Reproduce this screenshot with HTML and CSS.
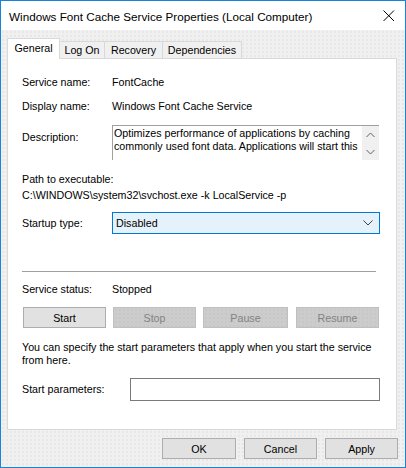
FILE: index.html
```html
<!DOCTYPE html>
<html lang="en">
<head>
    <meta charset="UTF-8">
    <title>Windows Font Cache Service Properties (Local Computer)</title>
    <link rel="stylesheet" href="styles.css">
</head>
<body>
    <div class="window">
        <div class="titlebar">
            <span class="title">Windows Font Cache Service Properties (Local Computer)</span>
            <svg class="close" width="12" height="12" viewBox="0 0 12 12">
                <path d="M0.5 0.5 L11 11 M11 0.5 L0.5 11" stroke="#000" stroke-width="1" fill="none"/>
            </svg>
        </div>

        <div class="client">
            <div class="tabs">
                <div class="tab selected tab-general">General</div>
                <div class="tab tab-logon">Log On</div>
                <div class="tab tab-recovery">Recovery</div>
                <div class="tab tab-deps">Dependencies</div>
            </div>

            <div class="panel">
                <div class="field row-service">
                    <span class="label">Service name:</span>
                    <span class="value">FontCache</span>
                </div>
                <div class="field row-display">
                    <span class="label">Display name:</span>
                    <span class="value">Windows Font Cache Service</span>
                </div>
                <div class="field row-desc">
                    <span class="label desc-label">Description:</span>
                    <div class="desc-box">
                        <div class="desc-text">Optimizes performance of applications by caching<br>commonly used font data. Applications will start this</div>
                        <div class="scrollbar">
                            <svg width="9" height="6" viewBox="0 0 9 6"><path d="M0.5 5 L4.5 1 L8.5 5" stroke="#606060" fill="none"/></svg>
                            <svg width="9" height="6" viewBox="0 0 9 6"><path d="M0.5 1 L4.5 5 L8.5 1" stroke="#606060" fill="none"/></svg>
                        </div>
                    </div>
                </div>

                <div class="path">
                    <div>Path to executable:</div>
                    <div>C:\WINDOWS\system32\svchost.exe -k LocalService -p</div>
                </div>

                <div class="field row-startup">
                    <span class="label">Startup type:</span>
                    <div class="combo">
                        <span>Disabled</span>
                        <svg width="10" height="6" viewBox="0 0 10 6"><path d="M0.5 0.5 L5 5 L9.5 0.5" stroke="#404040" fill="none"/></svg>
                    </div>
                </div>

                <div class="separator"></div>

                <div class="field row-status">
                    <span class="label">Service status:</span>
                    <span class="value">Stopped</span>
                </div>

                <div class="service-buttons">
                    <button class="btn">Start</button>
                    <button class="btn" disabled>Stop</button>
                    <button class="btn btn-pause" disabled>Pause</button>
                    <button class="btn" disabled>Resume</button>
                </div>

                <p class="hint">You can specify the start parameters that apply when you start the service<br>from here.</p>

                <div class="field row-params">
                    <span class="label params-label">Start parameters:</span>
                    <div class="params-input"></div>
                </div>
            </div>

            <div class="dialog-buttons">
                <button class="btn btn-ok">OK</button>
                <button class="btn">Cancel</button>
                <button class="btn">Apply</button>
            </div>
        </div>
    </div>
</body>
</html>
```

FILE: styles.css
```css
body {
    margin: 0;
    font-family: 'Liberation Sans', Arial, sans-serif;
    font-size: 10.7px;
    color: #000;
    background: #fff;
}
.window {
    width: 404px;
    height: 466px;
    border: 1px solid #1883d7;
    display: flex;
    flex-direction: column;
}
.titlebar {
    height: 29px;
    background: #fff;
    display: flex;
    align-items: center;
    justify-content: space-between;
    padding: 0 10px 0 8px;
}
.title {
    font-size: 11.7px;
    padding-top: 2px;
}
.close {
    margin-top: 1px;
}
.client {
    flex: 1;
    background-color: #f0f0f0;
    background-image: radial-gradient(circle, #e2e2e2 0.6px, transparent 0.9px);
    background-size: 4px 4px;
    padding: 8px 7px 0 6px;
}

/* tabs */
.tabs {
    display: flex;
    align-items: flex-end;
    height: 20px;
    position: relative;
    z-index: 1;
}
.tab {
    height: 16px;
    line-height: 17px;
    border: 1px solid #d9d9d9;
    border-bottom: none;
    background: #f0f0f0;
    text-align: center;
    margin-left: -1px;
    box-sizing: content-box;
}
.tab.selected {
    height: 20px;
    line-height: 19px;
    background: #fff;
    margin-left: 0;
    margin-bottom: -1px;
}
.tab-general { width: 51px; }
.tab-logon { width: 44px; margin-left: 0; border-left: none; }
.tab-recovery { width: 57px; }
.tab-deps { width: 78px; }

.panel {
    height: 370px;
    border: 1px solid #d9d9d9;
    background: #fff;
    padding: 0 14px;
    margin-right: 1px;
}

/* rows */
.field {
    display: flex;
    align-items: center;
    height: 15px;
    line-height: 15px;
}
.label {
    width: 90px;
    flex-shrink: 0;
}
.row-service { margin-top: 16px; }
.row-display { margin-top: 9px; }
.row-desc {
    margin-top: 11px;
    height: 35px;
    align-items: flex-start;
}
.desc-label { padding-top: 5px; }
.desc-box {
    width: 266px;
    height: 34px;
    border-top: 1px solid #a0a0a0;
    border-left: 1px solid #a0a0a0;
    display: flex;
    justify-content: space-between;
}
.desc-text {
    line-height: 13px;
    padding: 1px 0 0 1px;
    white-space: nowrap;
    overflow: hidden;
}
.scrollbar {
    width: 17px;
    flex-shrink: 0;
    background: #f0f0f0;
    display: flex;
    flex-direction: column;
    align-items: center;
    justify-content: space-between;
    padding: 6px 0 5px;
    box-sizing: border-box;
}
.scrollbar svg { display: block; }

.path {
    margin-top: 11px;
    line-height: 16px;
}

.row-startup {
    margin-top: 9px;
    height: 22px;
}
.combo {
    height: 20px;
    border: 1px solid #0078d7;
    background: #e5f1fb;
    display: flex;
    align-items: center;
    justify-content: space-between;
    padding: 0 6px 0 3px;
    box-sizing: content-box;
    margin-right: -3px;
    width: 257px;
}

.separator {
    margin: 37px 6px 0 0;
    height: 1px;
    background: #a0a0a0;
}

.row-status { margin-top: 10px; }

.service-buttons {
    display: flex;
    margin: 10px 0 0 1px;
    gap: 7px;
}
.btn {
    font-family: inherit;
    font-size: 10.7px;
    height: 21px;
    width: 83px;
    padding: 0;
    margin: 0;
    background: #e1e1e1;
    border: 1px solid #adadad;
    color: #000;
}
.btn:disabled {
    background-color: #cccccc;
    background-image: radial-gradient(circle, #c4c4c4 0.6px, transparent 0.9px);
    background-size: 4px 4px;
    border-color: #bfbfbf;
    color: #838383;
}
.btn-pause { width: 85px; margin-right: 1px; }

.hint {
    margin: 13px 0 0;
    line-height: 13px;
}

.row-params {
    margin-top: 11px;
    height: 23px;
}
.params-label { width: 108px; }
.params-input {
    width: 248px;
    height: 21px;
    border: 1px solid #7a7a7a;
    background: #fff;
}

.dialog-buttons {
    display: flex;
    justify-content: flex-end;
    gap: 8px;
    margin-top: 8px;
}
.dialog-buttons .btn { width: 73px; }
.dialog-buttons .btn-ok { width: 74px; }
```
